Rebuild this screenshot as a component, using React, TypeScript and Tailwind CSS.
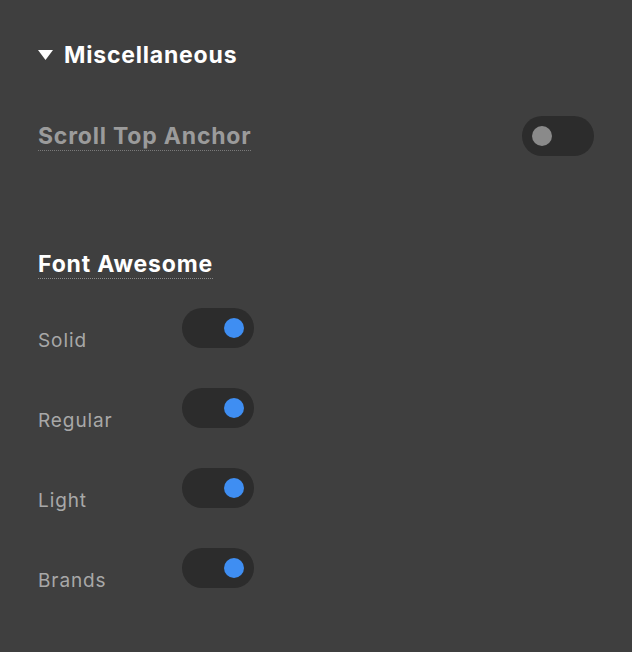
import React, { useState } from "react";

const Toggle: React.FC<{ on: boolean; onClick: () => void }> = ({ on, onClick }) => (
  <button
    type="button"
    onClick={onClick}
    className={`w-[72px] h-[40px] shrink-0 rounded-full bg-[#2c2c2c] flex items-center ${
      on ? "justify-end pr-[10px]" : "justify-start pl-[10px]"
    }`}
  >
    <span
      className={`block w-[20px] h-[20px] rounded-full ${on ? "bg-[#3f8ef2]" : "bg-[#8a8a8a]"}`}
    />
  </button>
);

const App: React.FC = () => {
  const [anchor, setAnchor] = useState(false);
  const [styles, setStyles] = useState({ Solid: true, Regular: true, Light: true, Brands: true });

  return (
    <div
      className="w-[632px] h-[652px] bg-[#3f3f3f] px-[38px] pt-[41px] flex flex-col"
      style={{ fontFamily: "Inter, 'Noto Sans', sans-serif" }}
    >
      {/* section header */}
      <div className="flex items-center h-[28px]">
        <svg width="15" height="10" viewBox="0 0 15 10" className="mr-[11px]">
          <polygon points="0,0 15,0 7.5,10" fill="#ffffff" />
        </svg>
        <span className="text-[23px] leading-[28px] font-bold text-white tracking-[0.8px]">
          Miscellaneous
        </span>
      </div>

      <div className="mt-[47px] flex items-center justify-between h-[40px]">
        <span className="text-[23px] leading-[28px] font-bold text-[#9b9b9b] border-b border-dotted border-[#7a7a7a] tracking-[0.8px]">
          Scroll Top Anchor
        </span>
        <Toggle on={anchor} onClick={() => setAnchor(!anchor)} />
      </div>

      <div className="mt-[94px] flex">
        <span className="text-[23px] leading-[28px] font-bold text-white border-b border-dotted border-[#8a8a8a] tracking-[0.8px]">
          Font Awesome
        </span>
      </div>

      <div className="mt-[29px] flex flex-col gap-[40px]">
        {(Object.keys(styles) as (keyof typeof styles)[]).map((name) => (
          <div key={name} className="flex h-[40px] items-start">
            <span className="w-[144px] mt-[21px] text-[19px] leading-[24px] text-[#a8a8a8] tracking-[0.9px]">
              {name}
            </span>
            <Toggle on={styles[name]} onClick={() => setStyles({ ...styles, [name]: !styles[name] })} />
          </div>
        ))}
      </div>
    </div>
  );
};

export default App;
